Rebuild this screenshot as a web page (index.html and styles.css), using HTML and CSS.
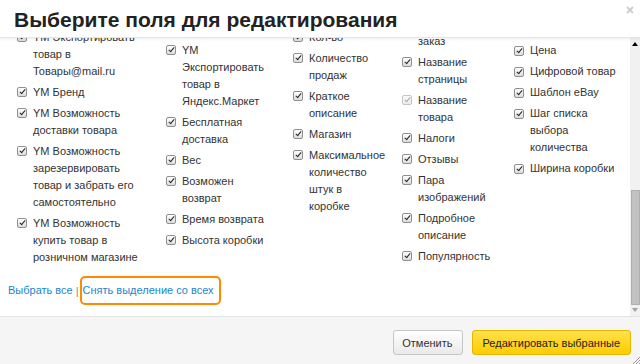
FILE: index.html
```html
<!DOCTYPE html>
<html lang="ru">
<head>
    <meta charset="UTF-8">
    <meta name="viewport" content="width=device-width, initial-scale=1.0">
    <title>Выберите поля для редактирования</title>
    <link rel="stylesheet" href="styles.css">
</head>
<body>

    <div class="dialog">
        <div class="dialog-head">
            <h1>Выберите поля для редактирования</h1>
            <a class="close" href="#" title="Закрыть">
                <svg width="8" height="8" viewBox="0 0 8 8"><path d="M1 1L7 7M7 1L1 7" stroke="#cfcfcf" stroke-width="2"/></svg>
            </a>
        </div>

        <div class="dialog-body">
            <div class="scroll-area">
                <div class="fields">
                    <ul class="col col-1">
                        <li><span class="cb"></span><span class="label">YM Экспортировать товар в Товары@mail.ru</span></li>
                        <li><span class="cb"></span><span class="label">YM Бренд</span></li>
                        <li><span class="cb"></span><span class="label">YM Возможность доставки товара</span></li>
                        <li><span class="cb"></span><span class="label">YM Возможность зарезервировать товар и забрать его самостоятельно</span></li>
                        <li><span class="cb"></span><span class="label">YM Возможность купить товар в розничном магазине</span></li>
                    </ul>
                    <ul class="col col-2">
                        <li><span class="cb"></span><span class="label">YM Экспортировать товар в Яндекс.Маркет</span></li>
                        <li><span class="cb"></span><span class="label">Бесплатная доставка</span></li>
                        <li><span class="cb"></span><span class="label">Вес</span></li>
                        <li><span class="cb"></span><span class="label">Возможен возврат</span></li>
                        <li><span class="cb"></span><span class="label">Время возврата</span></li>
                        <li><span class="cb"></span><span class="label">Высота коробки</span></li>
                    </ul>
                    <ul class="col col-3">
                        <li><span class="cb"></span><span class="label">Кол-во</span></li>
                        <li><span class="cb"></span><span class="label">Количество продаж</span></li>
                        <li><span class="cb"></span><span class="label">Краткое описание</span></li>
                        <li><span class="cb"></span><span class="label">Магазин</span></li>
                        <li><span class="cb"></span><span class="label">Максимальное количество штук в<br>коробке</span></li>
                    </ul>
                    <ul class="col col-4">
                        <li><span class="cb"></span><span class="label">Минимальный заказ</span></li>
                        <li><span class="cb"></span><span class="label">Название страницы</span></li>
                        <li><span class="cb disabled"></span><span class="label">Название товара</span></li>
                        <li><span class="cb"></span><span class="label">Налоги</span></li>
                        <li><span class="cb"></span><span class="label">Отзывы</span></li>
                        <li><span class="cb"></span><span class="label">Пара изображений</span></li>
                        <li><span class="cb"></span><span class="label">Подробное описание</span></li>
                        <li><span class="cb"></span><span class="label">Популярность</span></li>
                    </ul>
                    <ul class="col col-5">
                        <li><span class="cb"></span><span class="label">Цена</span></li>
                        <li><span class="cb"></span><span class="label">Цифровой товар</span></li>
                        <li><span class="cb"></span><span class="label">Шаблон eBay</span></li>
                        <li><span class="cb"></span><span class="label">Шаг списка выбора количества</span></li>
                        <li><span class="cb"></span><span class="label">Ширина коробки</span></li>
                    </ul>
                </div>

                <div class="links">
                    <a href="#">Выбрать все</a>
                    <span class="sep">|</span>
                    <a href="#" class="marked">Снять выделение со всех</a>
                </div>
            </div>

            <div class="scrollbar">
                <div class="sb-up"></div>
                <div class="sb-track"><div class="sb-thumb"></div></div>
                <div class="sb-down"></div>
            </div>
        </div>

        <div class="dialog-foot">
            <button class="btn btn-cancel">Отменить</button>
            <button class="btn btn-yellow">Редактировать выбранные</button>
            <svg class="resize" width="8" height="8" viewBox="0 0 8 8"><path d="M8 1L1 8M8 4L4 8M8 7L7 8" stroke="#9a9a9a" stroke-width="1"/></svg>
        </div>
    </div>

</body>
</html>
```

FILE: styles.css
```css
body {
    margin: 0;
    font-family: 'Liberation Sans', Arial, sans-serif;
    font-size: 11px;
    color: #333;
    background-color: white;
}
.dialog {
    width: 640px;
    height: 364px;
    display: flex;
    flex-direction: column;
    overflow: hidden;
}
.dialog-head {
    position: relative;
    z-index: 1;
    height: 38px;
    padding: 6px 14px 4px;
    box-sizing: border-box;
    background-color: white;
    border-bottom: 1px solid #e6e6e6;
    box-shadow: 0 1px 3px rgba(0, 0, 0, 0.08);
}
h1 {
    margin: 0;
    font-size: 21px;
    line-height: 28px;
    font-weight: bold;
    color: #222;
}
.close {
    position: absolute;
    top: 6px;
    right: 6px;
    line-height: 0;
}
.dialog-body {
    height: 278px;
    display: flex;
    background-color: white;
}
.scroll-area {
    flex: 1;
    overflow: hidden;
    padding: 0 8px;
}
.fields {
    display: flex;
    align-items: flex-start;
    margin-top: -22.5px;
    padding-left: 9px;
}
.col {
    list-style: none;
    margin: 0;
    padding: 0;
    flex: none;
}
.col li {
    display: flex;
    align-items: flex-start;
    line-height: 17px;
    margin-bottom: 4px;
}
.col-1 { width: 149px; padding-top: 13px; }
.col-1 .label { width: 110px; }
.col-2 { width: 127px; padding-top: 26px; }
.col-2 .label { width: 90px; }
.col-3 { width: 109px; padding-top: 13px; }
.col-3 .label { width: 77px; }
.col-4 { width: 112px; padding-top: 0; }
.col-4 .label { width: 82px; }
.col-5 { width: 110px; padding-top: 26.5px; }
.col-5 .label { width: 90px; }
.cb {
    flex: none;
    position: relative;
    width: 10px;
    height: 10px;
    margin: 3.5px 6px 0 0;
    box-sizing: border-box;
    border: 1px solid #8f8f8f;
    border-radius: 2px;
    background: linear-gradient(#ffffff, #dcdcdc);
}
.cb::after {
    content: "";
    position: absolute;
    left: 2.5px;
    top: 0px;
    width: 2px;
    height: 5px;
    border-right: 1.6px solid #222;
    border-bottom: 1.6px solid #222;
    transform: rotate(40deg);
}
.cb.disabled {
    border-color: #c4c4c4;
    background: linear-gradient(#fafafa, #ececec);
}
.cb.disabled::after {
    border-color: #a8a8a8;
}
.links {
    display: flex;
    align-items: center;
    height: 29px;
    margin-top: 6.5px;
}
.links a {
    color: #1a86cf;
    text-decoration: none;
    line-height: 17px;
}
.sep {
    color: #888;
    margin: 0 1px 0 3px;
}
.links .marked {
    padding: 4px 5px 4px 1px;
    border: 2px solid #ff8a00;
    border-radius: 5px;
}
.scrollbar {
    width: 10px;
    display: flex;
    flex-direction: column;
    background-color: #f1f1f1;
}
.sb-up, .sb-down {
    height: 13px;
    position: relative;
}
.sb-up::after, .sb-down::after {
    content: "";
    position: absolute;
    left: 2px;
    border-left: 3px solid transparent;
    border-right: 3px solid transparent;
}
.sb-up::after {
    top: 4px;
    border-bottom: 4px solid #000;
}
.sb-down::after {
    top: 3px;
    border-top: 4px solid #a3a3a3;
}
.sb-track {
    flex: 1;
}
.sb-thumb {
    margin: 140px 0 0 1px;
    height: 115px;
    background-color: #c1c1c1;
    border: 1px solid #b0b0b0;
    box-sizing: border-box;
}
.dialog-foot {
    position: relative;
    flex: 1;
    display: flex;
    justify-content: flex-end;
    align-items: flex-start;
    gap: 9px;
    padding: 13px 9px 0;
    background-color: #f5f5f5;
    border-top: 1px solid #e4e4e4;
}
.btn {
    height: 25px;
    padding: 0 10px;
    font-family: inherit;
    font-size: 11px;
    color: #333;
    background: linear-gradient(#ffffff, #e9e9e9);
    border: 1px solid #c6c6c6;
    border-radius: 3px;
    cursor: pointer;
}
.btn-cancel {
    padding: 0 9px 0 8px;
}
.btn-yellow {
    color: #222;
    background: linear-gradient(#ffe14a, #ffcc00);
    border-color: #e4b600;
}
.resize {
    position: absolute;
    right: 0;
    bottom: 0;
}
```
